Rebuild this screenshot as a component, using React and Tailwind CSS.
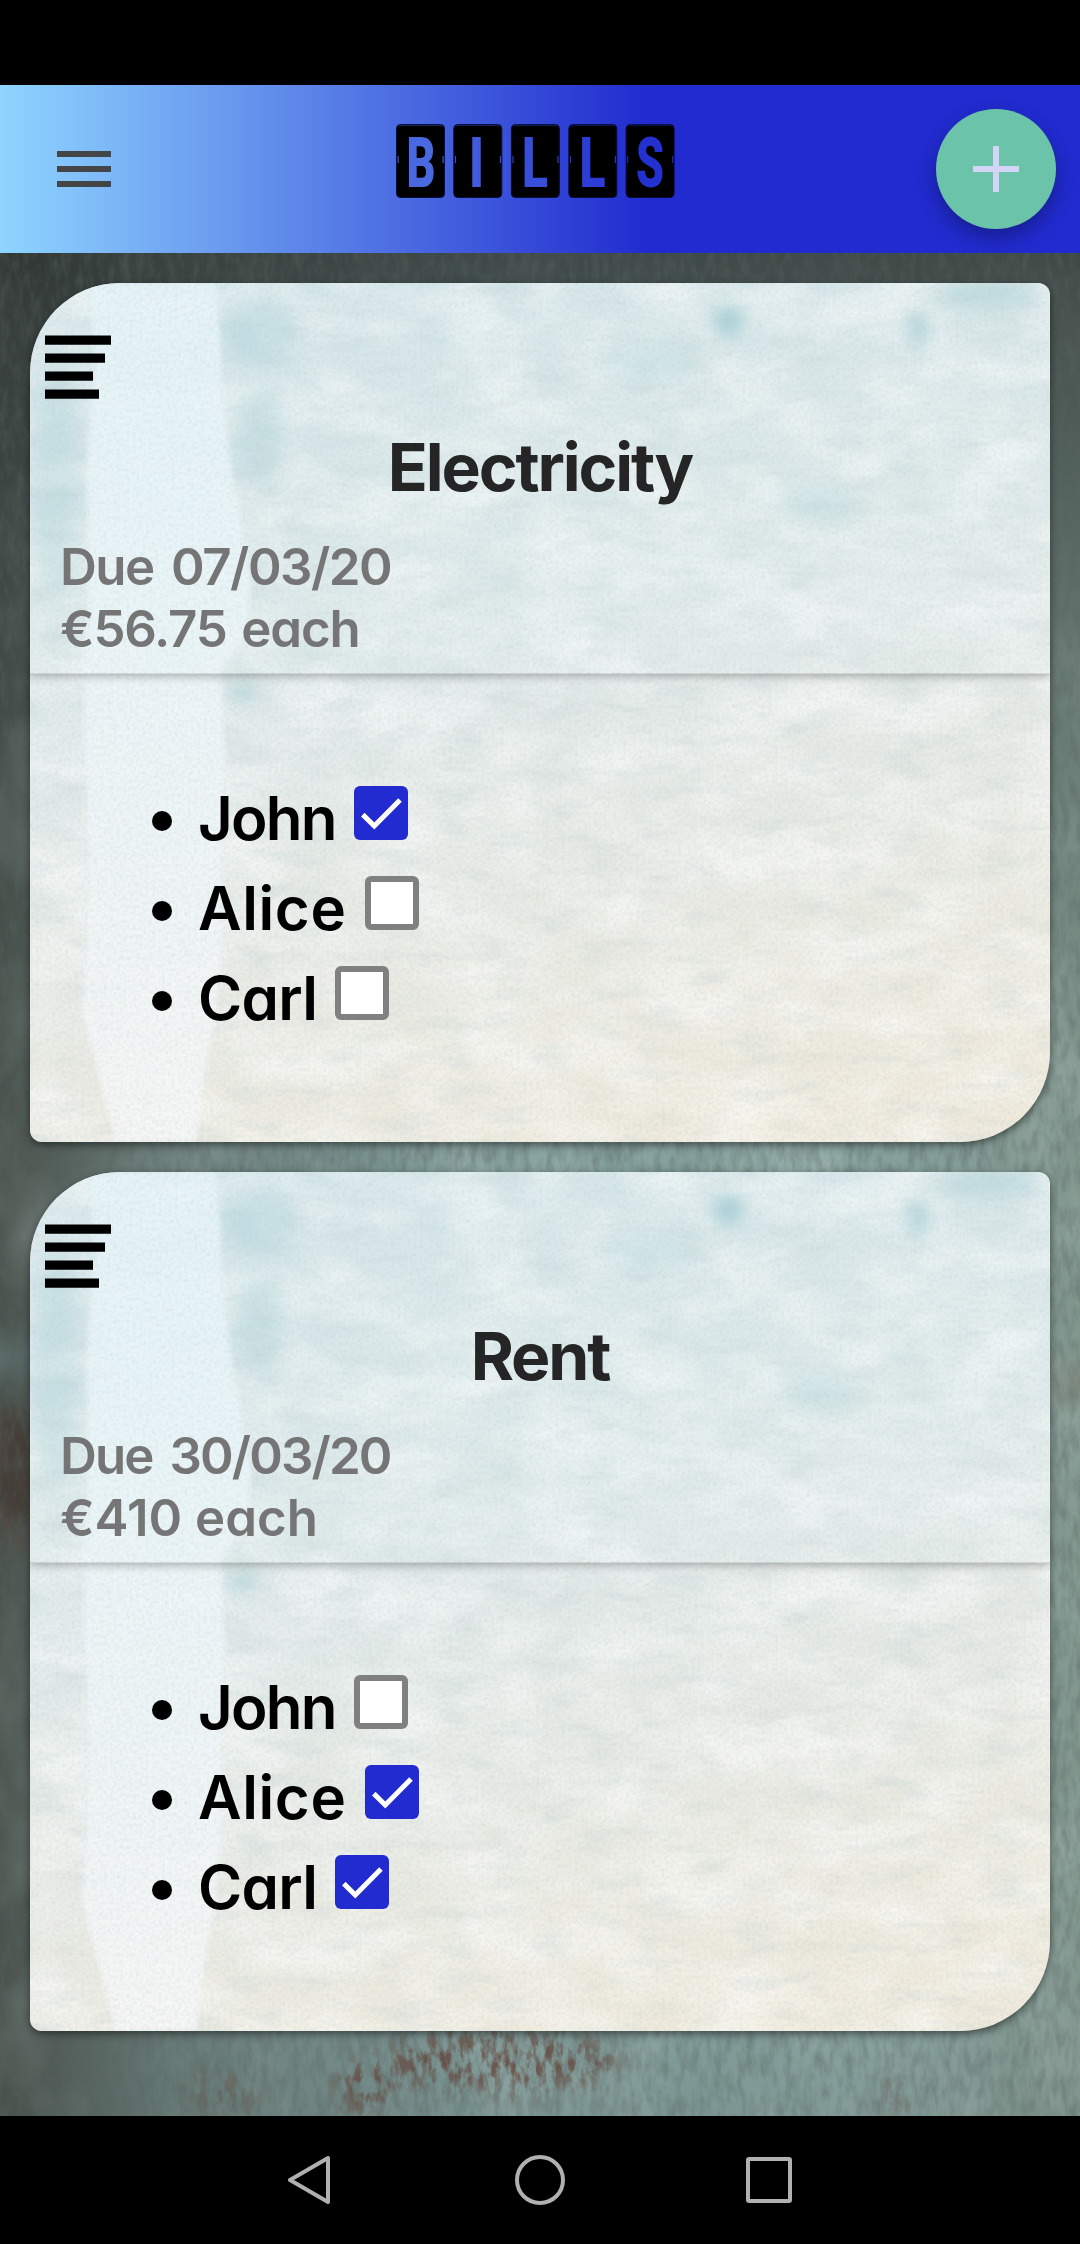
const bills = [
  {
    name: 'Electricity',
    due: '07/03/20',
    share: '€56.75',
    dueClass: 'tracking-[-1.5px] [word-spacing:6px]',
    shareClass: 'tracking-[-1.2px] [word-spacing:3px]',
    people: [
      { name: 'John', paid: true },
      { name: 'Alice', paid: false },
      { name: 'Carl', paid: false },
    ],
  },
  {
    name: 'Rent',
    due: '30/03/20',
    share: '€410',
    dueClass: 'tracking-[-1.9px] [word-spacing:6px]',
    shareClass: 'tracking-[0px]',
    people: [
      { name: 'John', paid: false },
      { name: 'Alice', paid: true },
      { name: 'Carl', paid: true },
    ],
  },
];

const nameClasses = {
  John: 'w-[156px] tracking-[-0.03em]',
  Alice: 'w-[167px] tracking-[0.01em]',
  Carl: 'w-[137px] tracking-[-0.012em]',
};

function WallTexture() {
  return (
    <svg className="absolute inset-0 w-full h-full" preserveAspectRatio="none" viewBox="0 0 1080 1863" aria-hidden="true">
      <defs>
        <filter id="wallGrain" x="0" y="0" width="100%" height="100%">
          <feTurbulence type="fractalNoise" baseFrequency="0.13 0.045" numOctaves="4" seed="7" />
          <feColorMatrix values="0 0 0 0 0.1  0 0 0 0 0.13  0 0 0 0 0.12  1.6 0 0 0 -0.62" />
        </filter>
        <filter id="wallBlotch" x="0" y="0" width="100%" height="100%">
          <feTurbulence type="fractalNoise" baseFrequency="0.012 0.008" numOctaves="3" seed="21" />
          <feColorMatrix values="0 0 0 0 0.62  0 0 0 0 0.72  0 0 0 0 0.7  1.6 0 0 0 -0.7" />
        </filter>
        <filter id="rustGrain" x="-10%" y="-10%" width="120%" height="120%">
          <feTurbulence type="fractalNoise" baseFrequency="0.11 0.05" numOctaves="4" seed="3" result="n" />
          <feColorMatrix in="n" values="0 0 0 0 0  0 0 0 0 0  0 0 0 0 0  4.5 0 0 0 -1.95" result="m" />
          <feGaussianBlur in="SourceGraphic" stdDeviation="13" result="b" />
          <feComposite in="b" in2="m" operator="in" />
        </filter>
        <filter id="stain" x="-200%" y="-50%" width="500%" height="200%">
          <feGaussianBlur stdDeviation="14" />
        </filter>
        <linearGradient id="wallBase" x1="0" x2="1" y1="0" y2="0">
          <stop offset="0" stopColor="#4c544f" />
          <stop offset="0.06" stopColor="#56625d" />
          <stop offset="0.16" stopColor="#6c807c" />
          <stop offset="0.45" stopColor="#829e9c" />
          <stop offset="0.8" stopColor="#88a39f" />
          <stop offset="1" stopColor="#82988f" />
        </linearGradient>
        <linearGradient id="wallShade" x1="0" x2="0" y1="0" y2="1">
          <stop offset="0" stopColor="#262b29" stopOpacity="0.74" />
          <stop offset="0.08" stopColor="#2c3331" stopOpacity="0.62" />
          <stop offset="0.25" stopColor="#2f3a38" stopOpacity="0.3" />
          <stop offset="0.45" stopColor="#2c3432" stopOpacity="0.02" />
          <stop offset="0.9" stopColor="#2c3432" stopOpacity="0" />
          <stop offset="1" stopColor="#2c3432" stopOpacity="0.1" />
        </linearGradient>
      </defs>
      <rect width="1080" height="1863" fill="url(#wallBase)" />
      <rect width="1080" height="1863" filter="url(#wallBlotch)" opacity="0.35" />
      <rect width="1080" height="1863" fill="url(#wallShade)" />
      <g filter="url(#stain)">
        <ellipse cx="14" cy="1215" rx="24" ry="60" fill="#3a2a22" opacity="0.7" />
        <rect x="-20" y="1090" width="60" height="30" fill="#6a8583" opacity="0.5" />
        <rect x="1050" y="1120" width="50" height="24" fill="#7a7468" opacity="0.6" />
      </g>
      <rect width="1080" height="1863" filter="url(#wallGrain)" opacity="0.55" />
      <g filter="url(#rustGrain)" fill="#633f35" opacity="0.75">
        <ellipse cx="500" cy="1808" rx="120" ry="30" />
        <ellipse cx="365" cy="1835" rx="28" ry="28" />
        <ellipse cx="225" cy="1840" rx="40" ry="16" opacity="0.6" />
        <ellipse cx="10" cy="1280" rx="16" ry="24" opacity="0.5" />
        <ellipse cx="893" cy="1845" rx="5" ry="36" />
      </g>
    </svg>
  );
}

function PaperTexture({ id }) {
  return (
    <svg className="absolute inset-0 w-full h-full" preserveAspectRatio="none" viewBox="0 0 1020 859" aria-hidden="true">
      <defs>
        <linearGradient id={`${id}-base`} x1="0.35" x2="0.65" y1="0" y2="1">
          <stop offset="0" stopColor="#d3e4e8" />
          <stop offset="0.4" stopColor="#dfe9e9" />
          <stop offset="0.7" stopColor="#e9ebe5" />
          <stop offset="1" stopColor="#f0ebdd" />
        </linearGradient>
        <linearGradient id={`${id}-strip`} x1="0" x2="0" y1="0" y2="1">
          <stop offset="0" stopColor="#e6f4fa" />
          <stop offset="0.5" stopColor="#eef6f9" />
          <stop offset="1" stopColor="#f6f7f8" />
        </linearGradient>
        <filter id={`${id}-grain`} x="0" y="0" width="100%" height="100%">
          <feTurbulence type="fractalNoise" baseFrequency="0.31 0.27" numOctaves="2" seed="11" />
          <feColorMatrix values="0 0 0 0 0.45  0 0 0 0 0.55  0 0 0 0 0.57  1.1 0.5 0 0 -0.66" />
        </filter>
        <filter id={`${id}-cloud`} x="0" y="0" width="100%" height="100%">
          <feTurbulence type="fractalNoise" baseFrequency="0.012 0.02" numOctaves="5" seed="5" />
          <feColorMatrix values="0 0 0 0 1  0 0 0 0 1  0 0 0 0 1  2.2 0 0 0 -0.75" />
        </filter>
        <filter id={`${id}-fleck`} x="0" y="0" width="100%" height="100%">
          <feTurbulence type="fractalNoise" baseFrequency="0.02 0.06" numOctaves="5" seed="17" />
          <feColorMatrix values="0 0 0 0 0.5  0 0 0 0 0.62  0 0 0 0 0.62  2.2 0 0 0 -1.1" />
        </filter>
        <filter id={`${id}-soft`} x="-80%" y="-80%" width="260%" height="260%">
          <feGaussianBlur stdDeviation="9" />
        </filter>
        <filter id={`${id}-edge`}>
          <feGaussianBlur stdDeviation="2.5" />
        </filter>
      </defs>
      <rect width="1020" height="859" fill={`url(#${id}-base)`} />
      <rect width="1020" height="859" filter={`url(#${id}-cloud)`} opacity="0.5" />
      <rect width="1020" height="859" filter={`url(#${id}-fleck)`} opacity="0.3" />
      <g filter={`url(#${id}-soft)`} fill="#7fbcc6">
        <ellipse cx="698" cy="38" rx="14" ry="14" opacity="0.75" />
        <ellipse cx="888" cy="46" rx="7" ry="18" opacity="0.75" />
        <ellipse cx="960" cy="12" rx="50" ry="12" opacity="0.35" />
        <ellipse cx="620" cy="80" rx="50" ry="16" opacity="0.2" />
        <ellipse cx="230" cy="50" rx="36" ry="34" opacity="0.25" />
        <ellipse cx="230" cy="150" rx="26" ry="50" opacity="0.22" />
        <ellipse cx="25" cy="200" rx="22" ry="120" opacity="0.22" />
        <ellipse cx="790" cy="220" rx="40" ry="20" opacity="0.22" />
        <ellipse cx="210" cy="410" rx="16" ry="12" opacity="0.35" />
      </g>
      <path
        d="M60 0H185L191 60L192 110L196 150L212 250L222 300L215 350L190 391L196 470L190 560L192 640L186 730L174 800L166 859H86L52 730L60 620L56 480L54 391L58 300L56 180L64 90Z"
        fill={`url(#${id}-strip)`}
        opacity="0.88"
        filter={`url(#${id}-edge)`}
      />
      <rect width="1020" height="391" fill="#e6f3f7" opacity="0.12" />
      <rect width="1020" height="859" filter={`url(#${id}-grain)`} opacity="0.36" />
    </svg>
  );
}

function Logo() {
  const tiles = [
    { ch: 'B', x: 0, tx: 10.6, w: 29, fill: '#4a69e0' },
    { ch: 'I', x: 57.3, tx: 73, w: 15, fill: '#415bdc' },
    { ch: 'L', x: 114.9, tx: 126, w: 26, fill: '#384dd8' },
    { ch: 'L', x: 172.3, tx: 183.6, w: 26, fill: '#2d3cd5' },
    { ch: 'S', x: 229.6, tx: 240, w: 28, fill: '#2431d1' },
  ];
  return (
    <svg className="block w-[299px] h-[114px]" viewBox="-10 -20 299 114" aria-label="BILLS">
      {tiles.map((t) => (
        <g key={t.x}>
          <rect x={t.x + 0.5} y="0.5" width="48" height="73" rx="4" fill="#000" stroke="#0a0d40" />
          <path d={`M${t.x + 3} 2.5V1.6H${t.x + 46}V2.5`} fill="none" stroke={t.fill} strokeOpacity="0.4" />
          <rect x={t.x + 1.6} y="32" width="1" height="7" fill={t.fill} />
          <rect x={t.x + 46.6} y="32" width="1" height="7" fill={t.fill} />
          <text
            x={t.tx}
            y="62.7"
            textLength={t.w}
            lengthAdjust="spacingAndGlyphs"
            fill={t.fill}
            className="font-[Roboto,sans-serif] font-black text-[71px]"
          >
            {t.ch}
          </text>
        </g>
      ))}
    </svg>
  );
}

function Checkbox({ checked }) {
  if (!checked) {
    return <span className="block size-[54px] rounded-[6px] border-[6px] border-[#808080] bg-white" />;
  }
  return (
    <span className="block size-[54px] rounded-[6px] bg-[#212bcf]">
      <svg className="block size-full" viewBox="0 0 54 54" fill="none" stroke="#fff" strokeWidth="5">
        <path d="M8.8 28.6L20.3 40L46 14" />
      </svg>
    </span>
  );
}

function BillCard({ bill, id }) {
  return (
    <article className="relative h-[859px] rounded-[12px] rounded-tl-[90px] rounded-br-[90px] overflow-hidden shadow-[0_3px_9px_rgba(0,0,0,0.5)]">
      <PaperTexture id={id} />
      <header className="relative h-[391px] shadow-[0_2px_9px_rgba(0,0,0,0.3)] [clip-path:inset(0_0_-20px_0)] border-b border-black/10">
        <svg className="block absolute left-[15px] top-[52px] w-[66px] h-[66px]" viewBox="0 0 66 66">
          <path d="M0 .5H66V9.8H0ZM0 18.5H60V27.8H0ZM0 36.5H48V45.8H0ZM0 54.5H54V63.8H0Z" />
        </svg>
        <h2 className="h-[253px] pt-36 text-center text-[66px] leading-[80px] font-[650] tracking-[-0.032em] text-[#252525]">{bill.name}</h2>
        <div className="pl-[30px] text-[51px] leading-[62px] font-[630] text-[#757575]">
          <p className={bill.dueClass}>Due {bill.due}</p>
          <p className={bill.shareClass}>{bill.share} each</p>
        </div>
      </header>
      <ul className="relative pt-[98px] pl-[122px]">
        {bill.people.map((p) => (
          <li key={p.name} className="flex h-[90px] items-start">
            <span className="mt-[39px] size-[20px] rounded-full bg-black" />
            <span className={`ml-[26px] mt-[6px] whitespace-nowrap text-[60px] leading-[80px] font-[630] text-black ${nameClasses[p.name]}`}>
              {p.name}
            </span>
            <span className="mt-[14px]">
              <Checkbox checked={p.paid} />
            </span>
          </li>
        ))}
      </ul>
    </article>
  );
}

export default function App() {
  return (
    <div className="flex h-[2244px] w-[1080px] flex-col overflow-hidden bg-black font-[Inter,sans-serif] [font-feature-settings:'cv11']">
      <div className="h-[85px] shrink-0" />
      <header className="grid h-[168px] shrink-0 grid-cols-3 items-center bg-[linear-gradient(90deg,#8fd5ff_0%,#212bcf_60%)] pl-[57px] pr-6">
        <svg className="block w-[54px] h-9" viewBox="0 0 54 36" fill="#434547">
          <path d="M0 0H54V6H0ZM0 15H54V21H0ZM0 30H54V36H0Z" />
        </svg>
        <div className="-ml-[21px] flex w-[333px] justify-center pb-4">
          <Logo />
        </div>
        <button className="flex size-[120px] items-center justify-center justify-self-end rounded-full bg-[#6bc4a9] shadow-[0_9px_20px_rgba(0,0,0,0.3)]">
          <svg className="block size-[46px]" viewBox="0 0 46 46" fill="#d3d5f6">
            <path d="M20 0H26V20H46V26H26V46H20V26H0V20H20Z" />
          </svg>
        </button>
      </header>
      <main className="relative h-[1863px] shrink-0 overflow-hidden">
        <WallTexture />
        <div className="relative flex flex-col gap-[30px] p-[30px]">
          {bills.map((b, i) => (
            <BillCard key={b.name} bill={b} id={`paper${i}`} />
          ))}
        </div>
      </main>
      <nav className="grid flex-1 place-items-center">
        <svg className="block w-[504px] h-[50px]" viewBox="0 0 504 50" fill="none" stroke="#b0b0b0" strokeWidth="4" strokeLinejoin="round">
          <path d="M40 3V47L2 25Z" />
          <circle cx="252" cy="25" r="23" />
          <rect x="460" y="4" width="42" height="42" rx="1" />
        </svg>
      </nav>
    </div>
  );
}
